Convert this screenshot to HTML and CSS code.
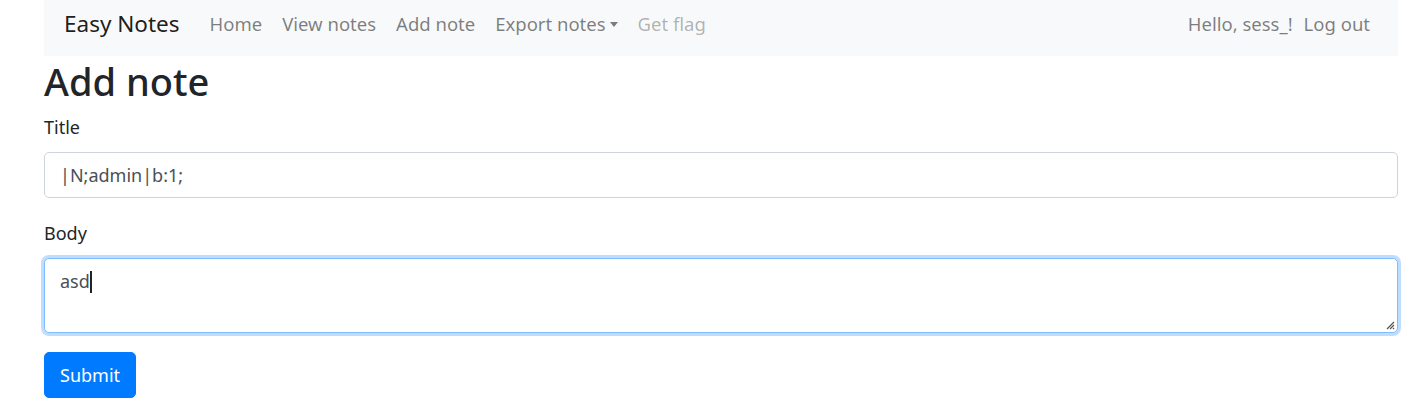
FILE: index.html
```html
<!DOCTYPE html>
<html>
<head>
<meta charset="utf-8">
<link rel="stylesheet" href="styles.css">
</head>
<body>
<div class="container">
  <nav class="navbar">
    <a class="brand" href="#">Easy Notes</a>
    <ul class="nav-left">
      <li><a class="nav-link" href="#">Home</a></li>
      <li><a class="nav-link" href="#">View notes</a></li>
      <li><a class="nav-link" href="#">Add note</a></li>
      <li><a class="nav-link dropdown" href="#">Export notes<span class="caret"></span></a></li>
      <li><a class="nav-link disabled" href="#">Get flag</a></li>
    </ul>
    <ul class="nav-right">
      <li><span class="nav-text">Hello, sess_!</span></li>
      <li><a class="nav-link" href="#">Log out</a></li>
    </ul>
  </nav>
  <h1 class="title">Add note</h1>
  <form class="form">
    <div class="group">
      <label class="label">Title</label>
      <input class="control" type="text" value="|N;admin|b:1;">
    </div>
    <div class="group">
      <label class="label">Body</label>
      <div class="control textarea focus"><span>asd</span><span class="cursor"></span>
        <svg class="grip" width="9" height="9" viewBox="0 0 9 9"><path d="M8 1L1 8M8 4L4 8M8 7L7 8" stroke="#555" stroke-width="1.2"/></svg>
      </div>
    </div>
    <button class="btn" type="button">Submit</button>
  </form>
</div>
</body>
</html>
```
FILE: styles.css
```css
* { box-sizing: border-box; }
html, body { margin: 0; padding: 0; background: #fff; }
body {
  font-family: "Noto Sans", "Open Sans", sans-serif;
  color: #212529;
}
.container { padding: 0 24px 0 44px; }
.navbar {
  background: #f8f9fa;
  height: 56px;
  display: flex;
  align-items: center;
  padding: 0 28px 10px 20px;
}
.brand {
  color: rgba(0,0,0,.9);
  text-decoration: none;
  font-size: 22.5px;
  margin-right: 20px;
}
.nav-left, .nav-right {
  list-style: none;
  margin: 0;
  padding: 0;
  display: flex;
}
.nav-left { flex: 1; }
.nav-link, .nav-text {
  display: block;
  color: rgba(0,0,0,.5);
  text-decoration: none;
  font-size: 18.5px;
  padding: 0 10px;
}
.nav-text { padding: 0 5px 0 0; }
.nav-right .nav-link { padding: 0 0 0 6px; }
.disabled { color: rgba(0,0,0,.3); }
.caret {
  display: inline-block;
  margin-left: 4px;
  vertical-align: 4px;
  border-top: 5px solid;
  border-left: 4px solid transparent;
  border-right: 4px solid transparent;
}
.title {
  font-size: 38px;
  font-weight: 500;
  margin: 3px 0 10px;
  line-height: 1.2;
}
.group { margin-bottom: 23px; }
.label {
  display: block;
  font-size: 18px;
  margin-bottom: 13px;
}
.control {
  display: block;
  width: 100%;
  height: 46px;
  border: 1px solid #ced4da;
  border-radius: 5px;
  padding: 0 15px;
  font-family: inherit;
  font-size: 18px;
  color: #495057;
  background: #fff;
  outline: none;
}
.textarea {
  position: relative;
  height: 75px;
  padding-top: 10px;
}
.focus {
  border-color: #80bdff;
  box-shadow: 0 0 0 3px rgba(0,123,255,.25);
}
.cursor {
  display: inline-block;
  width: 2px;
  height: 22px;
  background: #222;
  vertical-align: -5px;
}
.grip { position: absolute; right: 2px; bottom: 2px; }
.btn {
  background: #007bff;
  color: #fff;
  border: 1px solid #007bff;
  border-radius: 5px;
  height: 46px;
  padding: 0 15px;
  margin-top: -4px;
  font-family: inherit;
  font-size: 18px;
}
```
